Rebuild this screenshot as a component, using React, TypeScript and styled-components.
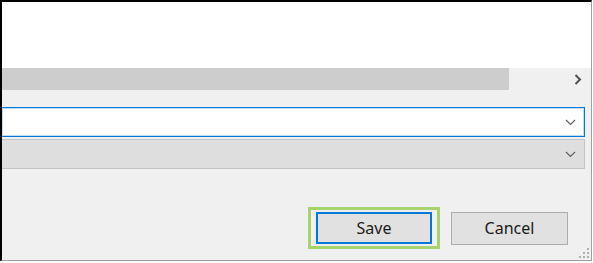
import styled, { createGlobalStyle } from 'styled-components';

const GlobalStyle = createGlobalStyle`
  html, body {
    margin: 0;
    padding: 0;
    background: #ffffff;
  }
  * {
    box-sizing: border-box;
  }
`;

const Frame = styled.div`
  width: 592px;
  height: 261px;
  border-top: 2px solid #000;
  border-left: 2px solid #000;
  border-right: 1px solid #a0a0a0;
  border-bottom: 1px solid #a0a0a0;
  display: flex;
  flex-direction: column;
  font-family: 'Noto Sans', 'Segoe UI', sans-serif;
`;

const TopArea = styled.div`
  height: 66px;
  background: #ffffff;
`;

const Panel = styled.div`
  flex: 1;
  background: #f0f0f0;
  position: relative;
  display: flex;
  flex-direction: column;
`;

const ScrollRow = styled.div`
  height: 22px;
  display: flex;
`;

const Thumb = styled.div`
  width: 507px;
  background: #cdcdcd;
`;

const ArrowBox = styled.div`
  flex: 1;
  display: flex;
  align-items: center;
  justify-content: flex-end;
  padding-right: 9px;
`;

const Combos = styled.div`
  margin-top: 17px;
  margin-right: 6px;
  display: flex;
  flex-direction: column;
  gap: 2px;
`;

const Combo = styled.div<{ $focused?: boolean }>`
  height: 30px;
  display: flex;
  align-items: center;
  justify-content: flex-end;
  padding-right: 8px;
  border: 1px solid ${(p) => (p.$focused ? '#0078d7' : '#c4c4c4')};
  border-left: none;
  background: ${(p) => (p.$focused ? '#ffffff' : '#dedede')};
  box-shadow: ${(p) => (p.$focused ? 'inset 0 0 0 1px rgba(0,120,215,0.25)' : 'none')};
`;

const ButtonRow = styled.div`
  margin-top: 38px;
  display: flex;
  align-items: center;
  justify-content: flex-end;
  gap: 11px;
  padding-right: 23px;
`;

const FocusRing = styled.div`
  border: 3px solid #a6d36d;
  padding: 2px 5px;
`;

const Button = styled.button<{ $primary?: boolean }>`
  width: ${(p) => (p.$primary ? '116px' : '117px')};
  height: ${(p) => (p.$primary ? '32px' : '33px')};
  background: #e1e1e1;
  border: ${(p) => (p.$primary ? '2px solid #0078d7' : '1px solid #adadad')};
  font-family: 'Noto Sans', 'Segoe UI', sans-serif;
  font-size: 16px;
  color: #1a1a1a;
  padding: 0;
  margin: 0;
  display: flex;
  align-items: center;
  justify-content: center;
`;

const Grip = styled.div`
  position: absolute;
  right: 2px;
  bottom: 2px;
  width: 10px;
  height: 10px;
  display: grid;
  grid-template-columns: repeat(3, 2px);
  grid-template-rows: repeat(3, 2px);
  gap: 2px;
`;

const Dot = styled.span<{ $on: boolean }>`
  background: ${(p) => (p.$on ? '#b0b0b0' : 'transparent')};
`;

const Chevron = () => (
  <svg width="11" height="7" viewBox="0 0 11 7">
    <path d="M1 1 L5.5 5.5 L10 1" fill="none" stroke="#5f5f5f" strokeWidth="1.2" />
  </svg>
);

const RightArrow = () => (
  <svg width="8" height="11" viewBox="0 0 8 11">
    <path d="M1.5 1 L6 5.5 L1.5 10" fill="none" stroke="#505050" strokeWidth="2" />
  </svg>
);

const gripPattern = [false, false, true, false, true, true, true, true, true];

export default function App() {
  return (
    <>
      <GlobalStyle />
      <Frame>
        <TopArea />
        <Panel>
          <ScrollRow>
            <Thumb />
            <ArrowBox>
              <RightArrow />
            </ArrowBox>
          </ScrollRow>
          <Combos>
            <Combo $focused>
              <Chevron />
            </Combo>
            <Combo>
              <Chevron />
            </Combo>
          </Combos>
          <ButtonRow>
            <FocusRing>
              <Button $primary>Save</Button>
            </FocusRing>
            <Button>Cancel</Button>
          </ButtonRow>
          <Grip>
            {gripPattern.map((on, i) => (
              <Dot key={i} $on={on} />
            ))}
          </Grip>
        </Panel>
      </Frame>
    </>
  );
}
